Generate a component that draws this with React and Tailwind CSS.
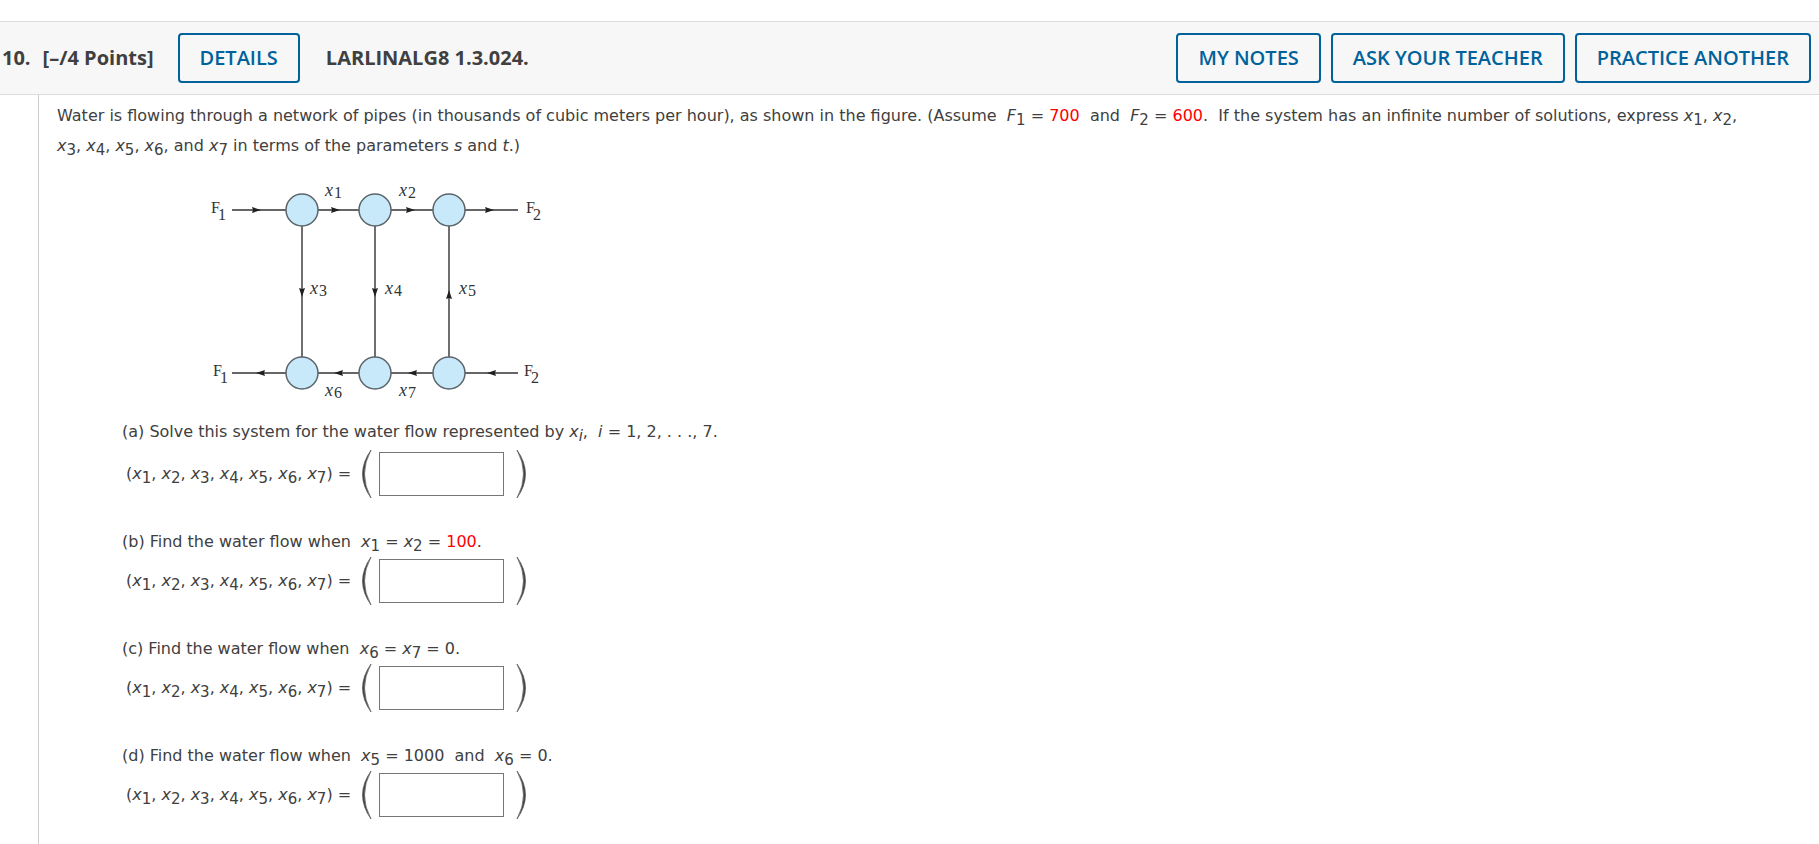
import React, { useState } from 'react';

const NODE_X = [112, 185, 259];
const TOP_Y = 40;
const BOTTOM_Y = 203;
const NODE_R = 16;

// [x1, y1, x2, y2]
const PIPES = [
  [42, TOP_Y, 328, TOP_Y],
  [42, BOTTOM_Y, 328, BOTTOM_Y],
  [112, TOP_Y, 112, BOTTOM_Y],
  [185, TOP_Y, 185, BOTTOM_Y],
  [259, TOP_Y, 259, BOTTOM_Y],
];

// tip of each arrow and the angle it points at
const ARROWS = [
  { x: 71, y: TOP_Y, angle: 0 },
  { x: 150, y: TOP_Y, angle: 0 },
  { x: 225, y: TOP_Y, angle: 0 },
  { x: 304, y: TOP_Y, angle: 0 },
  { x: 66, y: BOTTOM_Y, angle: 180 },
  { x: 144, y: BOTTOM_Y, angle: 180 },
  { x: 218, y: BOTTOM_Y, angle: 180 },
  { x: 297, y: BOTTOM_Y, angle: 180 },
  { x: 112, y: 127, angle: 90 },
  { x: 185, y: 127, angle: 90 },
  { x: 259, y: 120, angle: 270 },
];

const FLOW_LABELS = [
  { x: 135, y: 26, sub: '1' },
  { x: 209, y: 26, sub: '2' },
  { x: 120, y: 124, sub: '3' },
  { x: 195, y: 124, sub: '4' },
  { x: 269, y: 124, sub: '5' },
  { x: 135, y: 226, sub: '6' },
  { x: 209, y: 226, sub: '7' },
];

const END_LABELS = [
  { x: 21, y: 43, sub: '1' },
  { x: 336, y: 43, sub: '2' },
  { x: 23, y: 206, sub: '1' },
  { x: 334, y: 206, sub: '2' },
];

const Var = ({ name = 'x', sub }) => (
  <>
    <i>{name}</i>
    <sub className="text-[15px] leading-none bottom-0 align-[-4px]">{sub}</sub>
  </>
);

const Given = ({ children }) => <span className="text-[#ff0000]">{children}</span>;

const HeaderButton = ({ children }) => (
  <button
    type="button"
    className="h-[50px] px-5 rounded border-2 border-[#00629b] bg-[#f7f7f7] text-[#00629b] text-xl font-semibold whitespace-nowrap hover:bg-[#e6f0f6]"
  >
    {children}
  </button>
);

const PipeNetwork = () => (
  <svg
    width="370"
    height="240"
    viewBox="0 0 370 240"
    role="img"
    aria-label="Network of pipes with six junctions"
    className="block font-['Liberation_Serif',serif]"
  >
    {PIPES.map(([x1, y1, x2, y2]) => (
      <line key={`${x1}-${y1}-${x2}-${y2}`} x1={x1} y1={y1} x2={x2} y2={y2} stroke="#333333" strokeWidth="1.4" />
    ))}
    {ARROWS.map(({ x, y, angle }) => (
      <path
        key={`${x}-${y}`}
        d="M0 0 L-9 -3 L-8 0 L-9 3 Z"
        fill="#231f20"
        transform={`translate(${x} ${y}) rotate(${angle})`}
      />
    ))}
    {[TOP_Y, BOTTOM_Y].map((cy) =>
      NODE_X.map((cx) => (
        <circle key={`${cx}-${cy}`} cx={cx} cy={cy} r={NODE_R} fill="#c7e9fa" stroke="#5c6469" strokeWidth="1.5" />
      ))
    )}
    {FLOW_LABELS.map(({ x, y, sub }) => (
      <text key={sub} x={x} y={y} fontSize="18" fill="#333333">
        <tspan fontStyle="italic">x</tspan>
        <tspan dy="2" dx="1" fontSize="16">{sub}</tspan>
      </text>
    ))}
    {END_LABELS.map(({ x, y, sub }) => (
      <text key={`${x}-${y}`} x={x} y={y} fontSize="16" fill="#333333">
        F<tspan dy="7" dx="-2" fontSize="16">{sub}</tspan>
      </text>
    ))}
  </svg>
);

const Paren = ({ side }) => (
  <svg width="10" height="48" viewBox="0 0 10 48" aria-hidden="true" className="shrink-0">
    <path
      d={side === 'left' ? 'M9 0 Q-8 24 9 48 Q-4 24 9 0 Z' : 'M1 0 Q18 24 1 48 Q14 24 1 0 Z'}
      fill="#444444"
      stroke="#555555"
      strokeWidth="0.7"
    />
  </svg>
);

const AnswerRow = ({ id, value, onChange }) => (
  <div className="flex items-center pl-1 h-12">
    <label htmlFor={id} className="whitespace-nowrap">
      (
      {['1', '2', '3', '4', '5', '6', '7'].map((n) => (
        <React.Fragment key={n}>
          <Var sub={n} />
          {n !== '7' && ', '}
        </React.Fragment>
      ))}
      ) =
    </label>
    <div className="flex items-center ml-[11px]">
      <Paren side="left" />
      <input
        id={id}
        type="text"
        value={value}
        onChange={(e) => onChange(e.target.value)}
        className="w-[125px] h-11 ml-[7px] mr-3 px-2 border border-[#767676] bg-white outline-none focus:border-[#00629b]"
      />
      <Paren side="right" />
    </div>
  </div>
);

const QUESTIONS = [
  {
    id: 'a',
    text: (
      <>
        (a) Solve this system for the water flow represented by <Var sub={<i>i</i>} />,&nbsp; <i>i</i> = 1, 2, . . ., 7.
      </>
    ),
  },
  {
    id: 'b',
    text: (
      <>
        (b) Find the water flow when&nbsp; <Var sub="1" /> = <Var sub="2" /> = <Given>100</Given>.
      </>
    ),
  },
  {
    id: 'c',
    text: (
      <>
        (c) Find the water flow when&nbsp; <Var sub="6" /> = <Var sub="7" /> = 0.
      </>
    ),
  },
  {
    id: 'd',
    text: (
      <>
        (d) Find the water flow when&nbsp; <Var sub="5" /> = 1000&nbsp; and&nbsp; <Var sub="6" /> = 0.
      </>
    ),
  },
];

const App = () => {
  const [answers, setAnswers] = useState({ a: '', b: '', c: '', d: '' });

  const handleChange = (id, value) => {
    setAnswers((prev) => ({ ...prev, [id]: value }));
  };

  return (
    <div className="min-h-screen flex flex-col bg-white pt-[21px] text-[#404040]">
      <header className="flex items-center justify-between pl-0.5 pr-2 py-[11px] bg-[#f7f7f7] border-y border-[#dddddd] font-['Open_Sans',sans-serif] text-xl">
        <div className="flex items-center font-bold">
          <span>10.</span>
          <span className="ml-3 mr-6">[–/4 Points]</span>
          <HeaderButton>DETAILS</HeaderButton>
          <h1 className="ml-[26px]">LARLINALG8 1.3.024.</h1>
        </div>
        <div className="flex items-center gap-2.5">
          <HeaderButton>MY NOTES</HeaderButton>
          <HeaderButton>ASK YOUR TEACHER</HeaderButton>
          <HeaderButton>PRACTICE ANOTHER</HeaderButton>
        </div>
      </header>

      <main className="flex-1 ml-[38px] pl-[18px] pr-16 pt-1.5 border-l border-[#cccccc] font-['DejaVu_Sans',Verdana,sans-serif] text-base leading-[30px]">
        <p>
          Water is flowing through a network of pipes (in thousands of cubic meters per hour), as shown in the figure.
          (Assume&nbsp; <Var name="F" sub="1" /> = <Given>700</Given>&nbsp; and&nbsp; <Var name="F" sub="2" /> ={' '}
          <Given>600</Given>.&nbsp; If the system has an infinite number of solutions, express <Var sub="1" />,{' '}
          <Var sub="2" />, <Var sub="3" />, <Var sub="4" />, <Var sub="5" />, <Var sub="6" />, and <Var sub="7" /> in
          terms of the parameters <i>s</i> and <i>t</i>.)
        </p>

        <div className="pl-[133px] pt-[9px]">
          <PipeNetwork />
        </div>

        <div className="pl-[65px] pt-[7px] flex flex-col gap-[29px]">
          {QUESTIONS.map(({ id, text }) => (
            <section key={id} className="group">
              <p className="group-first:mb-[3px]">{text}</p>
              <AnswerRow id={`answer-${id}`} value={answers[id]} onChange={(value) => handleChange(id, value)} />
            </section>
          ))}
        </div>
      </main>
    </div>
  );
};

export default App;
